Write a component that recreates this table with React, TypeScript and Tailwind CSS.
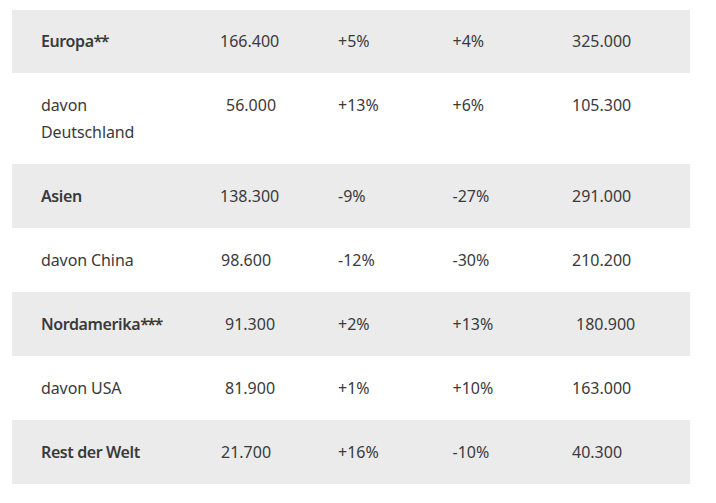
import React from "react";

type Row = {
  name: string[];
  stars?: string;
  bold: boolean;
  c2: string;
  c2x?: string;
  c3: string;
  c4: string;
  c5: string;
  c5x?: string;
};

const rows: Row[] = [
  { name: ["Europa"], stars: "**", bold: true, c2: "166.400", c3: "+5%", c4: "+4%", c5: "325.000" },
  { name: ["davon", "Deutschland"], bold: false, c2: "56.000", c2x: "pl-[6px]", c3: "+13%", c4: "+6%", c5: "105.300" },
  { name: ["Asien"], bold: true, c2: "138.300", c3: "-9%", c4: "-27%", c5: "291.000" },
  { name: ["davon China"], bold: false, c2: "98.600", c2x: "pl-[1px]", c3: "-12%", c4: "-30%", c5: "210.200" },
  { name: ["Nordamerika"], stars: "***", bold: true, c2: "91.300", c2x: "pl-[5px]", c3: "+2%", c4: "+13%", c5: "180.900", c5x: "pl-[4px]" },
  { name: ["davon USA"], bold: false, c2: "81.900", c2x: "pl-[5px]", c3: "+1%", c4: "+10%", c5: "163.000" },
  { name: ["Rest der Welt"], bold: true, c2: "21.700", c2x: "pl-[1px]", c3: "+16%", c4: "-10%", c5: "40.300" },
];

export default function App() {
  return (
    <div
      className="w-[716px] h-[503px] bg-white pt-[10px] pl-[12px] text-[16px] leading-[27px] text-[#3a3a3a]"
      style={{ fontFamily: '"Noto Sans", "Open Sans", sans-serif' }}
    >
      <div className="w-[678px] flex flex-col">
        {rows.map((r, i) => (
          <div
            key={i}
            className={`flex items-start pl-[29px] ${i === 0 ? "py-[18px]" : "py-[18.5px]"} ${i % 2 === 0 ? "bg-[#ebebeb]" : "bg-white"}`}
          >
            <div className={`w-[179px] ${r.bold ? "font-semibold tracking-[-0.4px]" : "tracking-[-0.1px]"}`}>
              {r.name.map((n, j) => (
                <div key={j}>
                  {n}
                  {r.stars && j === 0 ? <span className="tracking-[-1.5px]">{r.stars}</span> : null}
                </div>
              ))}
            </div>
            <div className={`w-[118px] ${r.c2x ?? ""}`}>{r.c2}</div>
            <div className="w-[114.5px]">{r.c3}</div>
            <div className="w-[119.5px]">{r.c4}</div>
            <div className={`flex-1 ${r.c5x ?? ""}`}>{r.c5}</div>
          </div>
        ))}
      </div>
    </div>
  );
}
